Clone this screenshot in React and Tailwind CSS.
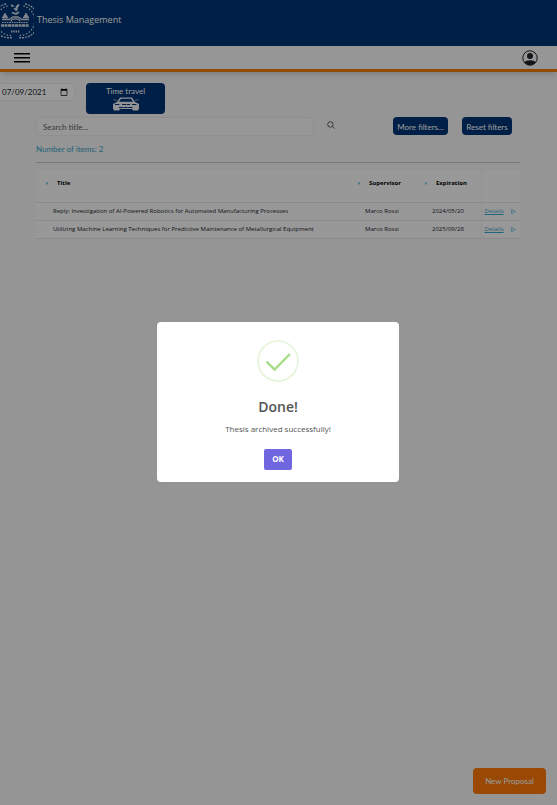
import React from 'react';

const proposals = [
  {
    title: 'Reply: Investigation of AI-Powered Robotics for Automated Manufacturing Processes',
    supervisor: 'Marco Rossi',
    expiration: '2024/05/20',
  },
  {
    title: 'Utilizing Machine Learning Techniques for Predictive Maintenance of Metallurgical Equipment',
    supervisor: 'Marco Rossi',
    expiration: '2025/09/28',
  },
];

function Crest() {
  return (
    <svg viewBox="0 0 40 40" className="-ml-1.5 h-10 w-10 shrink-0" fill="none" stroke="#d5dde9" aria-hidden="true">
      <path d="M12 4A17 17 0 0 0 18 37.500" strokeWidth="1.3" strokeDasharray="2 1" />
      <path d="M13.5 6A15 15 0 0 0 18 35.500" strokeWidth="1.3" strokeDasharray="1.4 1.8" />
      <path d="M31 4A17 17 0 0 1 25 37.500" strokeWidth="1.3" strokeDasharray="2 1" />
      <path d="M29.5 6A15 15 0 0 1 25 35.500" strokeWidth="1.3" strokeDasharray="1.4 1.8" />
      <path d="M7 25.500h28" strokeWidth="2.4" strokeDasharray="3 .5" />
      <path d="M8 22.500h26" strokeWidth="1.2" strokeDasharray="1.6 .8" />
      <path d="M8 19.500h7l4-2.500h5l4 2.500h7" strokeWidth="1.3" />
      <path d="M8 18l3-5 3 5zM29 18l3-5 3 5z" fill="#d5dde9" strokeWidth=".6" />
      <path d="M17 21.500c0-3.500 9-3.500 9 0" strokeWidth="1.2" />
      <path d="M17 5l2.500 1.500M20 9l3-1-1 3M25 4.500l-3 3M18 12.500l4 1.500 3-2" strokeWidth="1.8" />
      <path d="M17 31.500h9" strokeWidth="2" strokeDasharray="1.400 .9" />
    </svg>
  );
}

function Car() {
  return (
    <svg viewBox="0 0 28 14" className="h-3.5 w-7" aria-hidden="true">
      <path d="M8 .5h12l3 4.500 4 2v4.500L26 13.500h-5l-1-1.500H8l-1 1.500H2L1 11.500V7l4-2z" fill="#eef2f7" />
      <path d="M9 1.700h10l2 3H7z" fill="#003576" />
      <path d="M3 7.500h5M20 7.500h5M10 7.500h8M7 10.500h14" stroke="#003576" strokeWidth="1.1" strokeDasharray="4 .6" />
      <path d="M1.500 2.500l3.500 1M26.500 2.500l-3.500 1" stroke="#9fb2cc" strokeWidth=".8" />
    </svg>
  );
}

function SortArrow() {
  return (
    <svg viewBox="0 0 4 4" className="h-1 w-1" fill="#6fbdd6" aria-hidden="true">
      <path d="M.5 .5h3L2 3z" />
    </svg>
  );
}

function Heading({ children }) {
  return (
    <th className="p-0 pb-1 text-left font-bold text-black">
      <span className="flex items-center gap-2">
        <SortArrow />
        {children}
      </span>
    </th>
  );
}

export default function App() {
  return (
    <div className="min-h-screen overflow-x-hidden bg-[#f8f8f8] font-['Lato','Open_Sans',sans-serif] text-[#212529]">
      <header className="flex h-[46px] items-start gap-[3px] bg-[#003576] font-['Open_Sans','Noto_Sans',sans-serif] text-[9px] leading-10 text-white">
        <Crest />
        <span>Thesis Management</span>
      </header>
      <nav className="flex h-[26px] items-center justify-between border-b-3 border-[#f47b00] bg-[#fafafa] pr-[19px] pl-3.5 shadow-md">
        <button type="button" aria-label="Open menu">
          <svg viewBox="0 0 16 10" className="h-2.5 w-4" fill="#000">
            <path d="M0 0h16v1.400H0zM0 4h16v1.400H0zM0 8h16v1.400H0z" />
          </svg>
        </button>
        <button type="button" aria-label="Account">
          <svg viewBox="0 0 16 16" className="h-4 w-4">
            <circle cx="8" cy="8" r="7.2" fill="none" stroke="#20252b" strokeWidth="1" />
            <circle cx="8" cy="6" r="3" fill="#20252b" />
            <path d="M2.2 12.500C4 9.500 12 9.500 13.800 12.500 10.500 16.200 5.500 16.200 2.200 12.500z" fill="#20252b" />
          </svg>
        </button>
      </nav>

      <main className="pt-[11px]">
        <div className="flex h-[31px] items-start gap-[11px]">
          <input
            type="date"
            aria-label="Current date"
            defaultValue="2021-07-09"
            className="-ml-2 h-[18px] w-[83px] rounded-sm border border-[#eeeeee] bg-white pr-1.5 pl-[9px] text-[8px] [&::-webkit-calendar-picker-indicator]:m-0 [&::-webkit-calendar-picker-indicator]:size-2 [&::-webkit-calendar-picker-indicator]:p-0 [&::-webkit-datetime-edit-day-field]:p-0 [&::-webkit-datetime-edit-month-field]:p-0 [&::-webkit-datetime-edit-year-field]:p-0"
          />
          <button
            type="button"
            className="flex h-[31px] w-[79px] flex-col items-center rounded-sm bg-[#003576] pt-[3px] text-[8px] leading-[11px] text-white"
          >
            Time travel
            <Car />
          </button>
        </div>

        <div className="mt-[3px] mr-[37px] ml-9">
          <div className="flex items-start">
            <input
              type="text"
              aria-label="Search title"
              placeholder="Search title..."
              className="h-[19px] min-w-0 flex-1 rounded-sm border border-[#eeeeee] bg-[#fcfcfc] px-1.5 text-[8px] placeholder:text-[#5c6268]"
            />
            <button type="button" aria-label="Search" className="mt-1 ml-[13px]">
              <svg viewBox="0 0 8 8" className="h-2 w-2" fill="none" stroke="#212529" strokeWidth=".7">
                <circle cx="3.4" cy="3.4" r="2.7" />
                <path d="M5.4 5.4l2.2 2.2" />
              </svg>
            </button>
            <button type="button" className="ml-[58px] h-[18px] w-[55px] rounded-sm bg-[#003576] pt-px text-[8px] text-white">
              More filters...
            </button>
            <button type="button" className="mr-2 ml-3.5 h-[18px] w-[50px] rounded-sm bg-[#003576] pt-px text-[8px] text-white">
              Reset filters
            </button>
          </div>
          <p className="mt-1.5 text-[8px] leading-[14px] text-[#3aa5cb]">Number of items: 2</p>
          <hr className="mt-1.5 border-[#c8c8c8]" />
          <table className="mt-[7px] w-full table-fixed border-collapse bg-[#fdfdfd] font-['Open_Sans','Noto_Sans',sans-serif] text-[6px] leading-[9px]">
            <colgroup>
              <col className="w-[9px]" />
              <col />
              <col className="w-[67px]" />
              <col className="w-[57px]" />
              <col className="w-[39px]" />
            </colgroup>
            <thead>
              <tr className="h-8 border-b border-[#e6e6e6]">
                <td />
                <Heading>Title</Heading>
                <Heading>Supervisor</Heading>
                <Heading>Expiration</Heading>
                <td className="border-l border-[#f3f3f3]" />
              </tr>
            </thead>
            <tbody>
              {proposals.map((p) => (
                <tr key={p.title} className="h-[18px] border-b border-[#e6e6e6] whitespace-nowrap">
                  <td />
                  <td className="p-0 pl-2">{p.title}</td>
                  <td className="p-0 pl-2">{p.supervisor}</td>
                  <td className="p-0 pl-2">{p.expiration}</td>
                  <td className="border-l border-[#f3f3f3] p-0 pl-[3px]">
                    <span className="flex items-center justify-between pr-1 text-[#35a9d0]">
                      <a href="#details" className="underline">Details</a>
                      <button type="button" aria-label="Expand row">
                        <svg viewBox="0 0 5 5" className="h-[5px] w-[5px]" fill="none" stroke="#35a9d0" strokeWidth=".6">
                          <path d="M.6.5l3.8 2L.6 4.5z" />
                        </svg>
                      </button>
                    </span>
                  </td>
                </tr>
              ))}
            </tbody>
          </table>
        </div>
      </main>

      <button
        type="button"
        className="fixed right-[11px] bottom-[11px] h-[26px] w-[73px] rounded-sm bg-[#ff7b08] text-[8px] text-white"
      >
        New Proposal
      </button>

      <div className="fixed inset-0 flex items-center justify-center bg-black/40 pr-px pb-0.5 font-['Open_Sans','Noto_Sans',sans-serif]">
        <section
          role="dialog"
          aria-labelledby="dialog-title"
          className="flex w-[242px] flex-col items-center rounded-sm bg-white pt-[18px] pb-3 text-[#545454]"
        >
          <svg viewBox="0 0 42 42" className="h-[42px] w-[42px]" fill="none" aria-hidden="true">
            <circle cx="21" cy="21" r="20" stroke="#e4f4d9" strokeWidth="1.6" />
            <path d="M9.5 21.5l8 8L33 14" stroke="#a5dc86" strokeWidth="2.4" />
          </svg>
          <h2 id="dialog-title" className="mt-[15px] text-[14px] leading-5 font-semibold">Done!</h2>
          <p className="mt-1.5 text-[8px] leading-3">Thesis archived successfully!</p>
          <button type="button" className="mt-3.5 h-[21px] w-7 rounded-xs bg-[#7066e0] text-[8px] font-bold text-white">
            OK
          </button>
        </section>
      </div>
    </div>
  );
}
